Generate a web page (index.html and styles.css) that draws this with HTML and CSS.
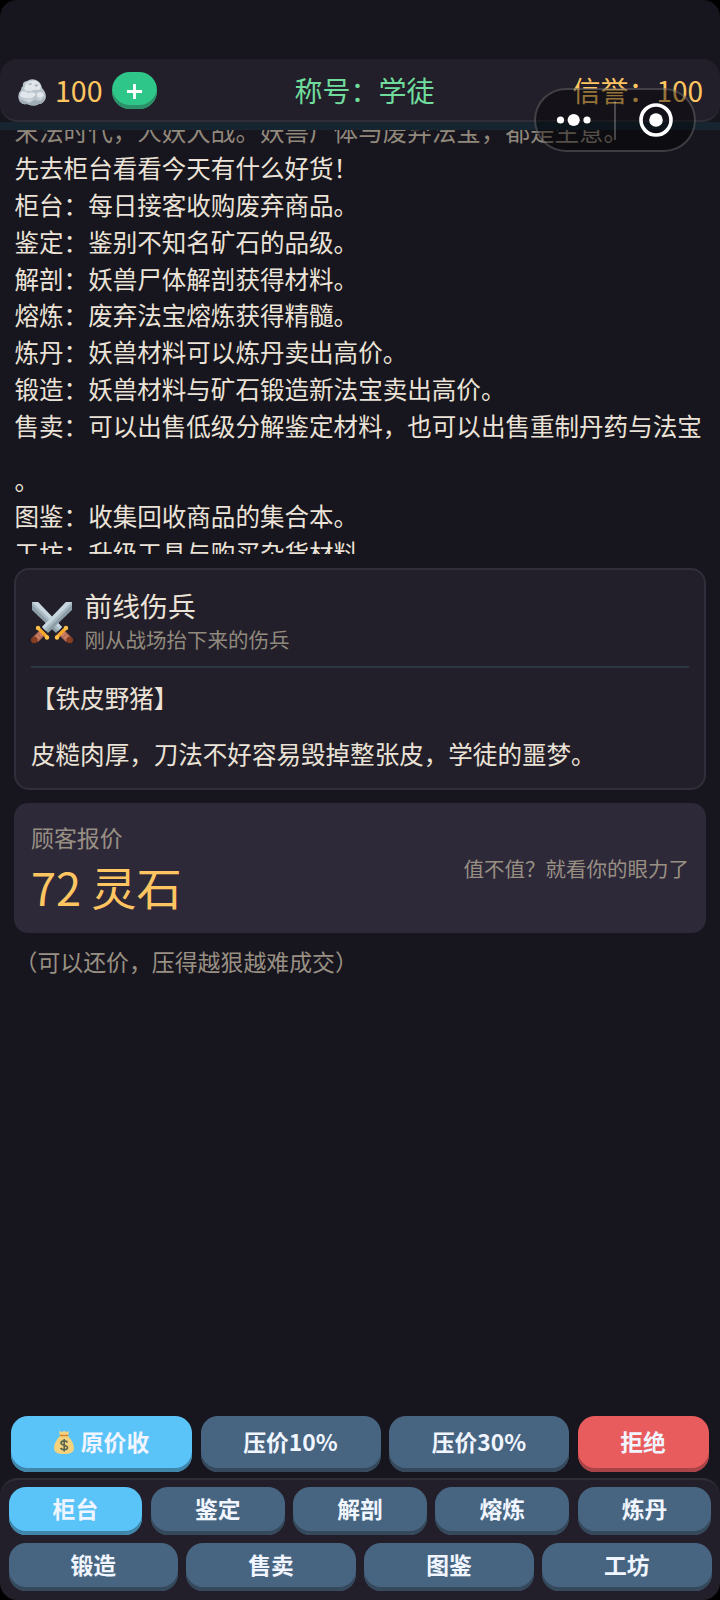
FILE: index.html
```html
<!DOCTYPE html>
<html lang="zh-CN">
<head>
<meta charset="utf-8">
<meta name="viewport" content="width=device-width, initial-scale=1">
<title>柜台</title>
<link rel="stylesheet" href="styles.css">
</head>
<body>
<div class="app">
  <header class="topbar">
    <div class="wallet">
      <svg class="rock" viewBox="0 0 28 27" aria-hidden="true">
        <path fill="#b9c3cb" d="M5 7Q4 3 9 2 13-1 18 1 23 3 24 9 29 14 27.500 20 25 25 21 25 16 28 9 25 3 26 1 21-1 15 3 11 3 8 5 7Z"/>
        <path fill="#e0e6ea" d="M7 7Q7 3 13 2 19 0 22 6 24 9 21 11 17 10 13 12 8 13 6 10ZM3 13Q7 11 10 14 15 12 18 15 16 20 10 19 5 20 2 17ZM19 14Q24 11 26 16 24 20 19 18Z"/>
        <path fill="#a0adb6" d="M9 5 14 4 13 6ZM16 6 20 5 19 8ZM1 20Q5 23 10 21 16 20 20 22L27 19Q25 25 21 25 16 28 9 25 3 26 1 21Z"/>
        <path fill="#c9d1d8" d="M5 21 12 19 16 21 11 24ZM19 20 25 18 23 22Z"/>
      </svg>
      <span class="coins">100</span>
      <button class="add" aria-label="增加"><svg viewBox="0 0 18 18"><path d="M9 1V17M1 9H17"/></svg></button>
    </div>
    <div class="rank">称号：学徒</div>
    <div class="credit">信誉：100</div>
  </header>
  <div class="strip"></div>
  <main class="log">
    <p class="faded">末法时代，人妖大战。妖兽尸体与废弃法宝，都是生意。</p>
    <p>先去柜台看看今天有什么好货！</p>
    <p>柜台：每日接客收购废弃商品。</p>
    <p>鉴定：鉴别不知名矿石的品级。</p>
    <p>解剖：妖兽尸体解剖获得材料。</p>
    <p>熔炼：废弃法宝熔炼获得精髓。</p>
    <p>炼丹：妖兽材料可以炼丹卖出高价。</p>
    <p>锻造：妖兽材料与矿石锻造新法宝卖出高价。</p>
    <p>售卖：可以出售低级分解鉴定材料，也可以出售重制丹药与法宝</p>
    <p class="wrapped">。</p>
    <p>图鉴：收集回收商品的集合本。</p>
    <p>工坊：升级工具与购买杂货材料</p>
  </main>
  <section class="visitor">
    <div class="visitor-head">
      <svg class="swords" viewBox="0 0 42 42" aria-hidden="true">
        <defs>
          <g id="sword">
            <path fill="#8c9ea8" d="M41 0V8L17 31 11 25 35 0Z"/>
            <path fill="#c8d7df" d="M41 0 14 28 11 25 35 0Z"/>
            <path fill="#a9bac3" d="M41 0V3L15 29 13 27Z"/>
            <path fill="#b86c55" d="M10 27 15 32 7 40 2 35Z"/>
            <path stroke="#d48b70" stroke-width="1.2" d="M8 31 11 34M5.500 33.500 8.500 36.500"/>
            <circle cx="3.200" cy="38" r="3.300" fill="#873d20"/>
            <path stroke="#f5a72b" stroke-width="3.200" stroke-linecap="round" d="M7 26 16 35"/>
            <circle cx="7" cy="26" r="2.200" fill="#ffc14a"/>
            <circle cx="16" cy="35.500" r="2.200" fill="#ffc14a"/>
          </g>
        </defs>
        <use href="#sword" transform="matrix(-1 0 0 1 42 0)"/>
        <use href="#sword"/>
      </svg>
      <div class="visitor-id">
        <h2 class="visitor-name">前线伤兵</h2>
        <div class="visitor-sub">刚从战场抬下来的伤兵</div>
      </div>
    </div>
    <p class="item-name">【铁皮野猪】</p>
    <p class="item-desc">皮糙肉厚，刀法不好容易毁掉整张皮，学徒的噩梦。</p>
  </section>
  <section class="offer">
    <div class="offer-main">
      <div class="offer-label">顾客报价</div>
      <div class="offer-price">72 灵石</div>
    </div>
    <div class="offer-note">值不值？就看你的眼力了</div>
  </section>
  <p class="hint">（可以还价，压得越狠越难成交）</p>
  <div class="actions">
    <button class="btn primary">
      <svg class="bag" viewBox="0 0 20 23" aria-hidden="true">
        <path fill="#f5d37e" d="M5 0 8 1 10 0 13 1 15 0 14 5C17 8 20 13 20 17 20 21 17 23 10 23S0 21 0 17C0 13 3 8 6 5Z"/>
        <path stroke="#d9822f" stroke-width="1.500" d="M6 4.500H14"/>
        <path fill="none" stroke="#59654c" stroke-width="1.600" d="M13.500 11.500C12 9 7 9.500 7 12S13.500 14 13.500 16.500 8 19.500 6.500 17M10.200 8V20.500"/>
      </svg>
      <span>原价收</span>
    </button>
    <button class="btn">压价10%</button>
    <button class="btn">压价30%</button>
    <button class="btn danger">拒绝</button>
  </div>
  <nav class="tabs">
    <div class="tab-row">
      <button class="btn primary">柜台</button>
      <button class="btn">鉴定</button>
      <button class="btn">解剖</button>
      <button class="btn">熔炼</button>
      <button class="btn">炼丹</button>
    </div>
    <div class="tab-row">
      <button class="btn">锻造</button>
      <button class="btn">售卖</button>
      <button class="btn">图鉴</button>
      <button class="btn">工坊</button>
    </div>
  </nav>
  <div class="capsule">
    <svg viewBox="0 0 162 64" aria-hidden="true">
      <g fill="#fff"><circle cx="26.500" cy="32" r="3.600"/><circle cx="39.700" cy="32" r="6.100"/><circle cx="53" cy="32" r="3.600"/><circle cx="122" cy="32" r="6.800"/></g>
      <path stroke="#fff" stroke-opacity=".23" stroke-width="2" d="M81 13V52"/>
      <circle cx="122" cy="32" r="15" fill="none" stroke="#fff" stroke-width="3.600"/>
    </svg>
  </div>
</div>
</body>
</html>
```
FILE: styles.css
```css
* { box-sizing: border-box; }
body { margin: 0; background: #000; }
p, h2 { margin: 0; font-weight: 400; }
button { border: 0; padding: 0; font: inherit; }

.app {
  position: relative;
  display: flex;
  flex-direction: column;
  width: 720px;
  height: 1600px;
  padding-top: 59px;
  overflow: hidden;
  border-radius: 17px;
  background: #17151e;
  color: #ebe3d7;
  font: 24.55px/36.8px "Noto Sans CJK SC", sans-serif;
}

.topbar {
  display: flex;
  align-items: center;
  justify-content: space-between;
  height: 63px;
  flex: none;
  padding: 2px 17px 0 18px;
  border-bottom: 2px solid #302d39;
  border-radius: 18px;
  background: #231f2a;
  font-size: 28px;
}
.wallet { display: flex; align-items: center; }
.rock { width: 28px; height: 27px; margin-top: 3px; }
.coins { margin-left: 9px; color: #ffc561; font-size: 28.600px; }
.add {
  display: flex;
  justify-content: center;
  width: 45px;
  height: 37px;
  margin-left: 9px;
  padding-top: 11px;
  border-radius: 18px;
  background: #2fc68a;
  box-shadow: inset 0 -4px #2c9069;
}
.add svg { width: 17px; height: 17px; fill: none; stroke: #fff; stroke-width: 3; }
.rank { color: #6fdc9d; }
.credit { color: #ffc561; text-align: right; }
.strip { flex: none; height: 8px; background: #172531; }

.log {
  height: 424px;
  flex: none;
  padding-left: 14.5px;
  overflow: hidden;
  white-space: nowrap;
}
.log p:first-child { margin-top: -16.600px; }
.faded { color: #91887c; }
.log .wrapped { padding-top: 17px; }

.visitor {
  height: 222px;
  flex: none;
  margin: 14px 14px 0;
  padding: 16px 15px 0;
  border: 2px solid #302e3a;
  border-radius: 15px;
  background: #231f2a;
}
.visitor-head {
  display: flex;
  align-items: center;
  height: 82px;
  border-bottom: 2px solid #2c3742;
}
.swords { width: 42px; height: 42px; margin: -6px 11.500px 0 0; }
.visitor-id { padding-bottom: 12px; }
.visitor-name { font-size: 27.800px; line-height: 38px; }
.visitor-sub { color: #918a7e; font-size: 20.500px; line-height: 30px; }
.item-name { margin-top: 12px; }
.item-desc { margin-top: 19.500px; }

.offer {
  display: flex;
  align-items: center;
  justify-content: space-between;
  height: 130px;
  flex: none;
  margin: 13px 14px 0;
  padding: 0 17px;
  border-radius: 14px;
  background: #2e2939;
}
.offer-main { padding-top: 3px; }
.offer-label { color: #999084; font-size: 22.900px; line-height: 34px; }
.offer-price { color: #ffc561; font-size: 45.200px; line-height: 66px; }
.offer-note { color: #999084; font-size: 20.500px; }
.hint { margin: 10px 14.500px 0; color: #999084; font-size: 22.900px; }

.btn {
  display: flex;
  align-items: center;
  justify-content: center;
  flex: 1;
  padding-bottom: 3px;
  border-radius: 17px;
  background: #476581;
  box-shadow: inset 0 -4px #36495c;
  color: #f0f5ff;
  font-size: 22.800px;
  font-weight: 700;
}
.primary { background: #5ac3f7; box-shadow: inset 0 -4px #4086aa; }
.danger { background: #e95c5d; box-shadow: inset 0 -4px #a84448; }
.actions {
  display: grid;
  grid-template-columns: 181fr 180fr 180fr 131fr;
  gap: 8.500px;
  height: 56px;
  flex: none;
  margin: auto 11.500px 6px 11px;
}
.bag { width: 20px; height: 23px; margin-right: 7px; }
.tabs {
  display: flex;
  flex-direction: column;
  gap: 8px;
  height: 122px;
  flex: none;
  padding: 7px 8.500px 9px;
  border-top: 2px solid #302d39;
  border-radius: 18px;
  background: #231f2a;
}
.tab-row { display: flex; flex: 1; gap: 8.500px; }

/* Floating host menu, drawn over the status row */
.capsule {
  position: absolute;
  top: 88px;
  left: 534px;
  width: 162px;
  height: 64px;
  border-radius: 32px;
  background: rgba(0, 0, 0, .42);
  box-shadow: inset 0 0 0 2px rgba(255, 255, 255, .2);
}
.capsule svg { display: block; width: 162px; height: 64px; }
```
